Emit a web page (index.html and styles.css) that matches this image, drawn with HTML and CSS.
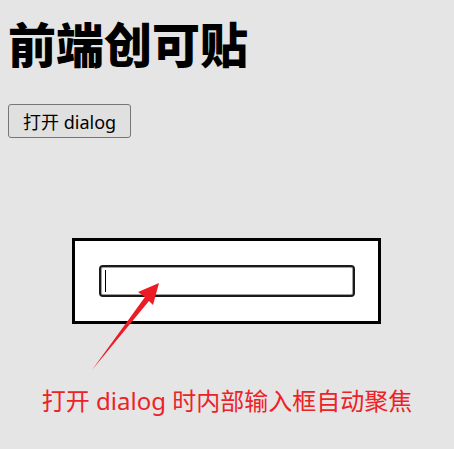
FILE: index.html
```html
<!DOCTYPE html>
<html lang="zh-CN">
<head>
    <meta charset="UTF-8">
    <meta name="viewport" content="width=device-width, initial-scale=1.0">
    <title>前端创可贴</title>
    <link rel="stylesheet" href="styles.css">
</head>
<body>
    <h1 class="title">前端创可贴</h1>

    <button class="open-btn">打开 dialog</button>

    <div class="dialog">
        <div class="field">
            <input class="field-input" type="text">
            <span class="caret"></span>
        </div>
    </div>

    <svg class="arrow" width="454" height="449" viewBox="0 0 454 449">
        <polygon points="92,370 145,297 138,292 159,283 153,305 149,301" fill="#ed1c24"/>
    </svg>

    <p class="note">打开 dialog 时内部输入框自动聚焦</p>
</body>
</html>
```

FILE: styles.css
```css
* {
    box-sizing: border-box;
}

body {
    margin: 8px;
    background: #e5e5e5;
    font-family: "Noto Sans", "Noto Sans CJK SC", sans-serif;
    color: #000;
}

.title {
    margin: 5px 0 33px;
    font-family: "Noto Sans CJK SC", sans-serif;
    font-size: 48px;
    line-height: 58px;
    font-weight: 900;
}

.open-btn {
    display: block;
    height: 34px;
    padding: 0 14px;
    font-family: "Noto Sans", "Noto Sans CJK SC", sans-serif;
    font-size: 18px;
    color: #000;
    background: #e0e0e0;
    border: 1px solid #767676;
    border-radius: 3px;
}

.dialog {
    width: 309px;
    margin: 100px 0 0 64px;
    padding: 24px;
    background: #fff;
    border: 3px solid #000;
}

.field {
    position: relative;
}

.field-input {
    display: block;
    width: 256px;
    height: 32px;
    border: 2px solid #1a1a1a;
    border-radius: 4px;
    box-shadow: inset 0 0 0 1px #a0a0a0;
    background: #fff;
    outline: none;
}

.caret {
    position: absolute;
    left: 6px;
    top: 5px;
    width: 1px;
    height: 22px;
    background: #000;
}

.arrow {
    position: absolute;
    left: 0;
    top: 0;
}

.note {
    margin: 58px 0 0;
    text-align: center;
    font-size: 24px;
    color: #ed2227;
}
```
